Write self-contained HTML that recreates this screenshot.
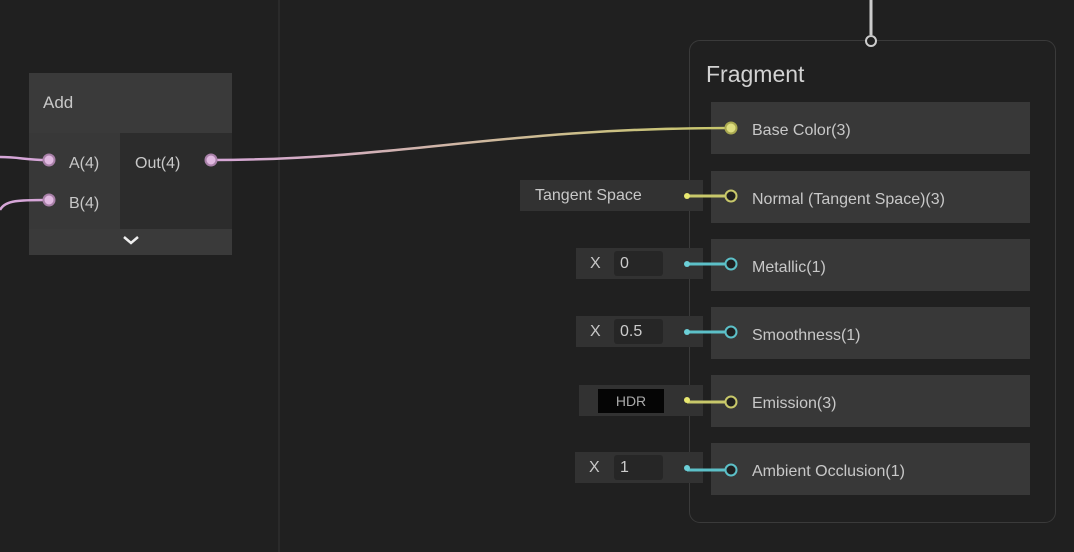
<!DOCTYPE html><html><head><style>
body{margin:0;width:1074px;height:552px;background:#202020;overflow:hidden;position:relative;font-family:"Liberation Sans",sans-serif;color:#c8c8c8}
div{position:absolute;box-sizing:border-box}
.row{left:711px;width:319px;height:52px;background:#383838;font-size:16px;padding-left:41px;line-height:58px}
.in{background:#323232;height:31px;font-size:16px;line-height:31px}
.fld{background:#262626;border-radius:3px;height:25px;top:3px;line-height:25px;padding-left:6px;color:#ccc}
</style></head><body>
<div style="left:278px;top:0;width:2px;height:552px;background:#2a2a2a"></div>
<div style="left:689px;top:40px;width:367px;height:483px;border:1px solid #3a3a3a;border-radius:11px"></div>
<div style="left:706px;top:61px;font-size:23px;color:#d2d2d2">Fragment</div>
<div class="row" style="top:102px">Base Color(3)</div>
<div class="row" style="top:171px">Normal (Tangent Space)(3)</div>
<div class="row" style="top:239px">Metallic(1)</div>
<div class="row" style="top:307px">Smoothness(1)</div>
<div class="row" style="top:375px">Emission(3)</div>
<div class="row" style="top:443px">Ambient Occlusion(1)</div>
<div class="in" style="left:520px;top:180px;width:183px;padding-left:15px">Tangent Space</div>
<div class="in" style="left:576px;top:248px;width:127px;padding-left:14px">X<div class="fld" style="left:38px;width:49px">0</div></div>
<div class="in" style="left:576px;top:316px;width:127px;padding-left:14px">X<div class="fld" style="left:38px;width:49px">0.5</div></div>
<div class="in" style="left:579px;top:385px;width:124px"><div style="left:19px;top:4px;width:66px;height:24px;background:#050505;font-size:14px;line-height:24px;text-align:center;color:#aaa">HDR</div></div>
<div class="in" style="left:575px;top:452px;width:128px;padding-left:14px">X<div class="fld" style="left:39px;width:49px">1</div></div>
<div style="left:29px;top:73px;width:203px;height:60px;background:#3a3a3a;font-size:17px;padding:20px 0 0 14px">Add</div>
<div style="left:29px;top:133px;width:91px;height:96px;background:#383838"></div>
<div style="left:120px;top:133px;width:112px;height:96px;background:#2c2c2c"></div>
<div style="left:29px;top:229px;width:203px;height:26px;background:#3a3a3a"></div>
<div style="left:69px;top:155px;font-size:16px">A(4)</div>
<div style="left:69px;top:195px;font-size:16px">B(4)</div>
<div style="left:135px;top:155px;font-size:16px">Out(4)</div>
<svg width="1074" height="552" style="position:absolute;left:0;top:0">
<defs><linearGradient id="g" x1="211" x2="731" gradientUnits="userSpaceOnUse"><stop offset="0" stop-color="#d6a6d8"/><stop offset="1" stop-color="#c8c86a"/></linearGradient></defs>
<path d="M124 237l7 6l7-6" stroke="#eee" stroke-width="2.5" fill="none"/>
<path d="M871 0v35" stroke="#ccc" stroke-width="3"/><circle cx="871" cy="41" r="5" fill="#202020" stroke="#ccc" stroke-width="2"/>
<path d="M0 157C20 157 25 160 47 160" stroke="#d6a6d8" stroke-width="2.5" fill="none"/>
<path d="M0 210C5 200 20 200 47 200" stroke="#d6a6d8" stroke-width="2.5" fill="none"/>
<path d="M211 160C400 160 500 128 731 128" stroke="url(#g)" stroke-width="2.5" fill="none"/>
<g fill="#e0b8e0" stroke="#a880a8" stroke-width="2"><circle cx="49" cy="160" r="5.5"/><circle cx="49" cy="200" r="5.5"/><circle cx="211" cy="160" r="5.5"/></g>
<circle cx="731" cy="128" r="5.5" fill="#dede80" stroke="#a8a850" stroke-width="2"/>
<g stroke-width="3"><path d="M687 196H726" stroke="#c8c86a"/><path d="M687 402H726" stroke="#c8c86a"/>
<path d="M687 264H726" stroke="#5cc0c8"/><path d="M687 332H726" stroke="#5cc0c8"/><path d="M687 470H726" stroke="#5cc0c8"/></g>
<g fill="#202020" stroke-width="2"><circle cx="731" cy="196" r="5.5" stroke="#c8c86a"/><circle cx="731" cy="402" r="5.5" stroke="#c8c86a"/>
<circle cx="731" cy="264" r="5.5" stroke="#5cc0c8"/><circle cx="731" cy="332" r="5.5" stroke="#5cc0c8"/><circle cx="731" cy="470" r="5.5" stroke="#5cc0c8"/></g>
<g><circle cx="687" cy="196" r="3" fill="#e8e870"/><circle cx="687" cy="400" r="3" fill="#e8e870"/><circle cx="687" cy="264" r="3" fill="#6cd0d8"/><circle cx="687" cy="332" r="3" fill="#6cd0d8"/><circle cx="687" cy="468" r="3" fill="#6cd0d8"/></g>
</svg>
</body></html>
